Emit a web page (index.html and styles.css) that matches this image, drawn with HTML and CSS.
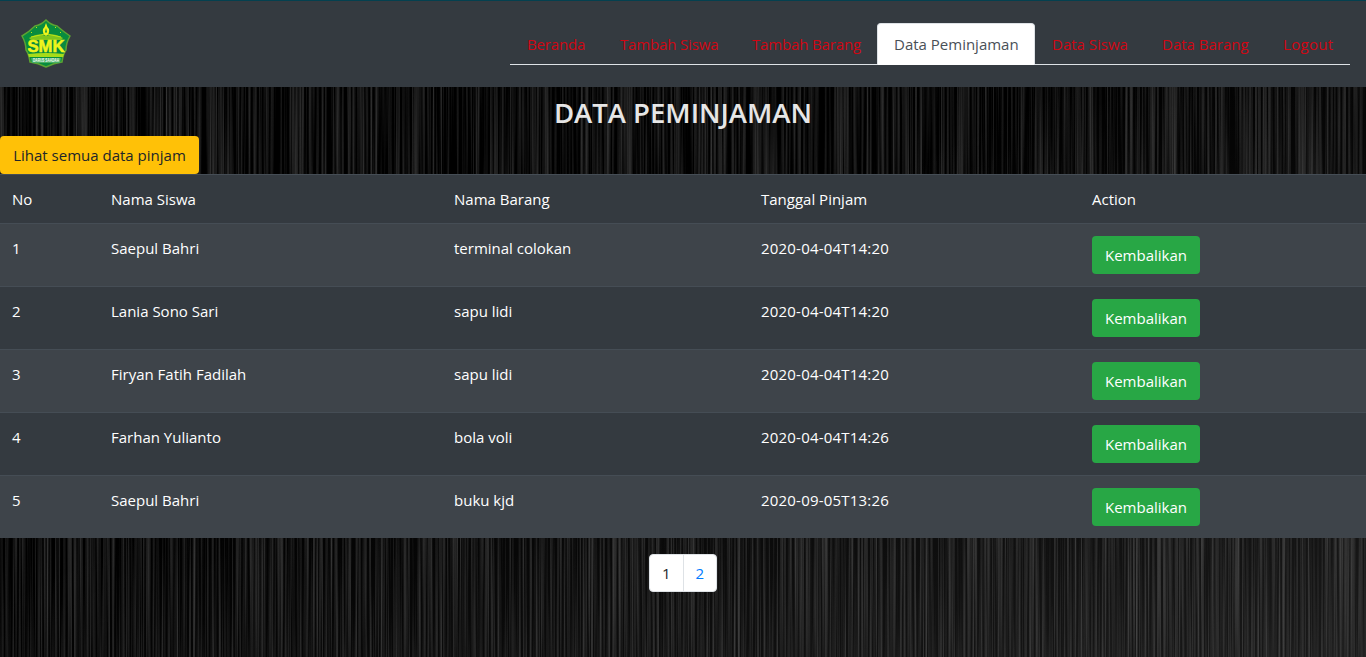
FILE: index.html
```html
<!DOCTYPE html>
<html lang="id">
<head>
<meta charset="utf-8">
<title>Data Peminjaman</title>
<link rel="stylesheet" href="styles.css">
</head>
<body>
<svg class="backdrop" width="1366" height="657" aria-hidden="true">
  <defs>
    <filter id="brushed" x="0" y="0" width="100%" height="100%" color-interpolation-filters="sRGB">
      <feTurbulence type="fractalNoise" baseFrequency="0.47 0.003" numOctaves="3" seed="8"/>
      <feColorMatrix values="0.42 0 0 0 -0.157  0.42 0 0 0 -0.157  0.42 0 0 0 -0.157  0 0 0 0 1"/>
    </filter>
    <linearGradient id="sheen" x1="0" y1="0" x2="1" y2="1">
      <stop offset="0.45" stop-color="#fff" stop-opacity="0"/>
      <stop offset="1" stop-color="#fff" stop-opacity="0.1"/>
    </linearGradient>
  </defs>
  <rect width="1366" height="657" filter="url(#brushed)"/>
  <rect width="1366" height="657" fill="url(#sheen)"/>
</svg>
<header class="navbar">
  <a class="brand" href="#">
    <svg width="50" height="50" viewBox="0 0 50 50">
      <path d="M25 1 Q30 6 36 7 Q43 13 49 17 Q45 24 45 31 Q42 35 41 43 Q33 44 25 48 Q17 44 9 43 Q8 35 5 31 Q5 24 1 17 Q8 13 14 7 Q20 6 25 1Z" fill="#078c3e" stroke="#5ca332" stroke-width="1.5"/>
      <path d="M8 19 Q17 13 25 17 Q33 13 42 19 L40 21 H10Z" fill="#7fc51d"/>
      <path d="M10 18 L24 15 M40 18 L26 15 M15 8 L16 9 M35 8 L34 9 M10 13 L11 14 M40 13 L39 14" stroke="#bce514" stroke-width="1"/>
      <path d="M25 4 Q26 8 28 10 Q29 15 25 17 Q21 15 22 10 Q24 8 25 4Z" fill="#f1f51b"/>
      <path d="M25 9 L26 13 L25 14 L24 13Z" fill="#159440"/>
      <text x="6.5" y="33" class="logo-word" textLength="37" lengthAdjust="spacingAndGlyphs">SMK</text>
      <path d="M7 35 Q25 33 43 35 L42 38 H8Z" fill="#a7dc19"/>
      <path d="M10 39 H40 L39 44 H11Z" fill="#45ae62"/>
      <text x="12" y="43.2" class="logo-name" textLength="26" lengthAdjust="spacingAndGlyphs">DARUS SAADAH</text>
    </svg>
  </a>
  <nav class="tabs">
    <a class="tab t-beranda" href="#">Beranda</a>
    <a class="tab t-tsiswa" href="#">Tambah Siswa</a>
    <a class="tab t-tbarang" href="#">Tambah Barang</a>
    <a class="tab t-pinjam active" href="#">Data Peminjaman</a>
    <a class="tab t-dsiswa" href="#">Data Siswa</a>
    <a class="tab t-dbarang" href="#">Data Barang</a>
    <a class="tab t-logout" href="#">Logout</a>
  </nav>
</header>
<main>
  <h1 class="title">DATA PEMINJAMAN</h1>
  <a class="btn btn-warning" href="#">Lihat semua data pinjam</a>
  <table class="table">
    <colgroup><col class="c-no"><col class="c-siswa"><col class="c-barang"><col class="c-tanggal"><col></colgroup>
    <tbody>
    <tr><td>No</td><td>Nama Siswa</td><td>Nama Barang</td><td>Tanggal Pinjam</td><td>Action</td></tr>
    <tr><td>1</td><td>Saepul Bahri</td><td>terminal colokan</td><td class="date">2020-04-04T14:20</td><td><a class="btn btn-success" href="#">Kembalikan</a></td></tr>
    <tr><td>2</td><td>Lania Sono Sari</td><td>sapu lidi</td><td class="date">2020-04-04T14:20</td><td><a class="btn btn-success" href="#">Kembalikan</a></td></tr>
    <tr><td>3</td><td>Firyan Fatih Fadilah</td><td>sapu lidi</td><td class="date">2020-04-04T14:20</td><td><a class="btn btn-success" href="#">Kembalikan</a></td></tr>
    <tr><td>4</td><td>Farhan Yulianto</td><td>bola voli</td><td class="date">2020-04-04T14:26</td><td><a class="btn btn-success" href="#">Kembalikan</a></td></tr>
    <tr><td>5</td><td>Saepul Bahri</td><td>buku kjd</td><td class="date">2020-09-05T13:26</td><td><a class="btn btn-success" href="#">Kembalikan</a></td></tr>
    </tbody>
  </table>
  <div class="pagination"><span class="page current">1</span><a class="page" href="#">2</a></div>
</main>
</body>
</html>
```
FILE: styles.css
```css
* { box-sizing: border-box; }
body {
  margin: 0;
  min-height: 657px;
  background: #0c0c0c;
  color: #fff;
  font: 15px/24px "Segoe UI", "Open Sans", "Noto Sans", sans-serif;
  overflow: hidden;
}
a { text-decoration: none; color: inherit; }
.backdrop { position: absolute; inset: 0; z-index: -1; }
.navbar {
  display: flex;
  justify-content: space-between;
  align-items: flex-start;
  height: 87px;
  padding: 18px 16px 0 21px;
  border-top: 1px solid #04404f;
  background: #343a40;
}
.brand, .brand svg { display: block; overflow: visible; }
.logo-word { font: 900 17px "Liberation Sans", sans-serif; fill: #eff51c; stroke: #eff51c; stroke-width: 0.6; }
.logo-name { font: bold 4.5px/6px "Liberation Sans", sans-serif; fill: #fff; }
.tabs { display: flex; height: 42px; margin-top: 4px; border-bottom: 1px solid #dee2e6; }
.tab {
  height: 42px;
  padding: 8px 0 8px 16px;
  border: 1px solid transparent;
  border-radius: 4px 4px 0 0;
  color: #cf0713;
  white-space: nowrap;
}
.tab.active { background: #fff; border-color: #dee2e6 #dee2e6 #fff; color: #495057; }
.t-beranda { width: 93px; letter-spacing: -0.15px; }
.t-tsiswa { width: 132px; letter-spacing: -0.15px; }
.t-tbarang { width: 142px; letter-spacing: -0.15px; }
.t-pinjam { width: 158px; }
.t-dsiswa { width: 110px; }
.t-dbarang { width: 121px; }
.t-logout { width: 84px; letter-spacing: 0.3px; }
.title {
  height: 49px;
  margin: 0;
  padding-top: 9px;
  color: #e6e6e6;
  font-size: 27.5px;
  font-weight: 600;
  line-height: 33px;
  text-align: center;
}
.btn {
  display: block;
  height: 38px;
  padding: 7px 0;
  border-radius: 4px;
  text-align: center;
  white-space: nowrap;
}
.btn-warning { width: 199px; background: #ffc107; color: #212529; }
.btn-success { width: 108px; background: #28a745; color: #fff; }
.table { width: 100%; table-layout: fixed; border-collapse: separate; border-spacing: 0; background: #343a40; }
.c-no { width: 99px; }
.c-siswa { width: 343px; }
.c-barang { width: 307px; }
.c-tanggal { width: 331px; }
.table td { padding: 12px; border-top: 1px solid #454d55; vertical-align: top; }
.table tr:nth-child(even) { background: #3e444a; }
.table .date { letter-spacing: 0.2px; }
.pagination { display: flex; width: 68px; height: 38px; margin: 16px auto 0; border: 1px solid #dee2e6; border-radius: 4px; background: #fff; }
.page { flex: 1; padding-top: 6px; color: #007bff; text-align: center; }
.page.current { color: #212529; border-right: 1px solid #dee2e6; }
```
